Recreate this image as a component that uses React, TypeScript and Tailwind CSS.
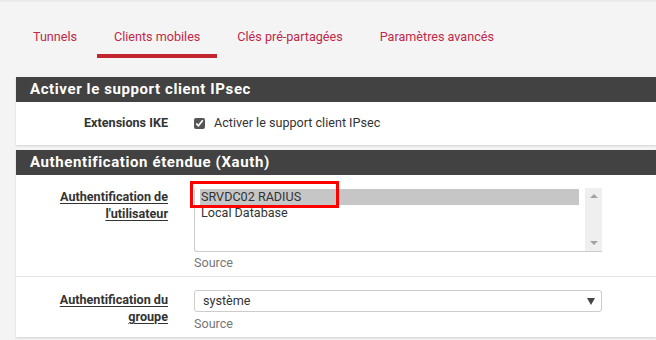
const tabs = ["Tunnels", "Clients mobiles", "Clés pré-partagées", "Paramètres avancés"];

function PanelHeader({ title }: { title: string }) {
  return (
    <div className="h-[25px] bg-[#424242] pl-[14px] flex items-center">
      <h2 className="text-[15px] font-bold text-white tracking-[0.6px]">{title}</h2>
    </div>
  );
}

export default function App() {
  return (
    <div
      className="w-[656px] h-[340px] overflow-hidden bg-[#f4f4f4] text-[#333] text-[12.6px]"
      style={{ fontFamily: "Roboto, 'Liberation Sans', sans-serif" }}
    >
      <div className="h-[3px] bg-gradient-to-b from-[#e6e6e6] to-[#f4f4f4]" />

      {/* onglets */}
      <div className="flex gap-[3px] pl-4 pt-[22px] h-[74px]">
        {tabs.map((t, i) => (
          <div
            key={t}
            className={
              i === 1
                ? "px-[17px] h-[33px] flex items-start pt-[3px] border-b-4 border-[#c1272d] text-[#c0284a] text-[12.6px]"
                : "px-[17px] h-[33px] flex items-start pt-[3px] text-[#c0284a] text-[12.6px]"
            }
          >
            {t}
          </div>
        ))}
      </div>

      {/* Activer le support client IPsec */}
      <div className="ml-4 bg-white shadow-[0_1px_2px_rgba(0,0,0,0.15)]">
        <PanelHeader title="Activer le support client IPsec" />
        <div className="flex items-center h-[43px]">
          <div className="w-[152px] text-right font-bold">Extensions IKE</div>
          <div className="flex items-center ml-[26px] gap-[9px]">
            <input type="checkbox" defaultChecked className="w-[11px] h-[11px] accent-[#555]" />
            <span>Activer le support client IPsec</span>
          </div>
        </div>
      </div>

      {/* Xauth */}
      <div className="ml-4 mt-[5px] bg-white shadow-[0_1px_2px_rgba(0,0,0,0.15)]">
        <PanelHeader title="Authentification étendue (Xauth)" />
        <div className="flex h-[102px] border-b border-[#e3e3e3]">
          <div className="w-[152px] pt-[13px] text-right font-bold leading-[17px]">
            <span className="underline underline-offset-2">Authentification de</span>
            <br />
            <span className="underline underline-offset-2">l'utilisateur</span>
          </div>
          <div className="ml-[26px] pt-[13px]">
            <div className="relative w-[408px] h-[64px] flex border-l border-b border-[#ccc] rounded-l-[3px]">
              <div className="flex-1 pt-[1px] pl-[5px]">
                <div className="h-[16px] bg-[#c6c6c6] leading-[16px] pl-[1px]">SRVDC02 RADIUS</div>
                <div className="leading-[16px] pl-[1px]">Local Database</div>
              </div>
              <div className="w-[17px] bg-[#efefef] flex flex-col items-center justify-between py-[6px] ml-[6px]">
                <span className="w-0 h-0 border-x-[4px] border-x-transparent border-b-[4px] border-b-[#a3a3a3]" />
                <span className="w-0 h-0 border-x-[4px] border-x-transparent border-t-[4px] border-t-[#a3a3a3]" />
              </div>
              <div className="absolute left-[-5px] top-[-7px] w-[149px] h-[27px] border-[3px] border-[#ff0000]" />
            </div>
            <div className="mt-[2px] text-[#777]">Source</div>
          </div>
        </div>
        <div className="flex h-[60px]">
          <div className="w-[152px] pt-[14px] text-right font-bold leading-[17px]">
            <span className="underline underline-offset-2">Authentification du</span>
            <br />
            <span className="underline underline-offset-2">groupe</span>
          </div>
          <div className="ml-[26px] pt-[13px]">
            <div className="w-[408px] h-[22px] border border-[#ccc] rounded-[3px] flex items-center justify-between pl-[8px] pr-[6px]">
              <span>système</span>
              <span className="w-0 h-0 border-x-[4px] border-x-transparent border-t-[7px] border-t-[#444]" />
            </div>
            <div className="mt-[3px] text-[#777]">Source</div>
          </div>
        </div>
      </div>
    </div>
  );
}
